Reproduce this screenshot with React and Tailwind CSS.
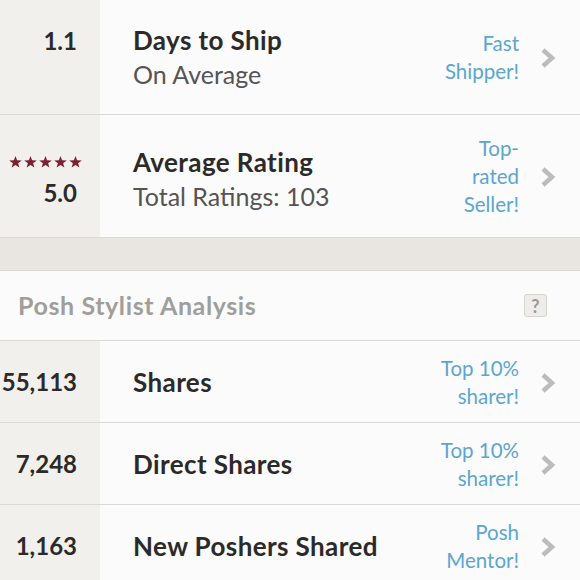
import React from "react";

const font = { fontFamily: "Lato, 'Open Sans', sans-serif" };

function Chevron() {
  return (
    <svg width="16" height="20" viewBox="0 0 16 20" className="shrink-0">
      <path d="M3 2 L12 10 L3 18" fill="none" stroke="#bdbcbb" strokeWidth="4.5" strokeLinecap="butt" strokeLinejoin="miter" />
    </svg>
  );
}

function Stars() {
  const star = "M6.5 0 L8.1 4.3 L12.8 4.4 L9.1 7.2 L10.4 11.6 L6.5 9 L2.6 11.6 L3.9 7.2 L0.2 4.4 L4.9 4.3 Z";
  return (
    <div className="flex gap-[2px]">
      {[0, 1, 2, 3, 4].map((i) => (
        <svg key={i} width="13" height="12" viewBox="0 0 13 12">
          <path d={star} fill="#7a2133" />
        </svg>
      ))}
    </div>
  );
}

function Notch() {
  return (
    <div className="w-0 h-0 border-y-[7px] border-y-transparent border-l-[7px] border-l-[#f2f0ed]" />
  );
}

function Row({ height, left, notchTop, title, sub, blue, border = true, midPad = "" }) {
  return (
    <div className={`flex ${height} ${border ? "border-b border-[#dcdad8]" : ""}`}>
      <div className="w-[100px] shrink-0 bg-[#f2f0ed] flex flex-col items-end justify-center pr-[23px]">
        {left}
      </div>
      <div className="flex flex-col justify-center w-0">
        <div className={notchTop}>
          <Notch />
        </div>
      </div>
      <div className="flex-1 flex items-center bg-[#fcfbfb] pl-[33px]">
        <div className={`flex-1 flex flex-col ${midPad}`}>
          <div className="text-[26px] leading-[34px] font-bold tracking-[0.4px] text-[#2b2a29]">{title}</div>
          {sub && <div className="text-[25px] leading-[34px] text-[#555453]">{sub}</div>}
        </div>
        <div className="text-[20.5px] leading-[28px] text-[#5aa6cf] text-right mr-[21px]">
          {blue.map((b, i) => (
            <div key={i}>{b}</div>
          ))}
        </div>
        <div className="mr-[24px] pt-[2px]">
          <Chevron />
        </div>
      </div>
    </div>
  );
}

const num = "text-[24px] font-bold text-[#2b2a29] leading-[34px]";

export default function App() {
  return (
    <div style={font} className="w-[580px] h-[580px] overflow-hidden bg-[#fcfbfb]">
      <Row
        height="h-[115px]"
        left={<div className={`${num} -mt-[33px]`}>1.1</div>}
        notchTop="-mt-[33px]"
        title="Days to Ship"
        sub="On Average"
        blue={["Fast", "Shipper!"]}
      />
      <Row
        height="h-[123px]"
        left={
          <div className="flex flex-col items-end pt-[14px]">
            <div className="mr-[-5px] mb-[10px]"><Stars /></div>
            <div className={`${num} -mt-[2px]`}>5.0</div>
          </div>
        }
        notchTop="-mt-[26px]"
        title="Average Rating"
        sub="Total Ratings: 103"
        blue={["Top-", "rated", "Seller!"]}
        midPad="pt-[6px]"
      />
      <div className="h-[33px] bg-[#e9e6e1] border-b border-[#d8d6d2]" />
      <div className="h-[70px] flex items-center border-b border-[#dcdad8] bg-[#fcfbfb] pl-[18px] pr-[33px]">
        <div className="flex-1 text-[25px] font-bold tracking-[0.6px] text-[#a09e9b]">Posh Stylist Analysis</div>
        <div className="w-[23px] h-[23px] rounded-[3px] bg-[#efedea] border border-[#d6d4d1] flex items-center justify-center">
          <span className="text-[18px] font-bold text-[#9b9996] leading-none">?</span>
        </div>
      </div>
      <Row
        height="h-[82px]"
        left={<div className={num}>55,113</div>}
        notchTop=""
        title="Shares"
        blue={["Top 10%", "sharer!"]}
      />
      <Row
        height="h-[82px]"
        left={<div className={num}>7,248</div>}
        notchTop=""
        title="Direct Shares"
        blue={["Top 10%", "sharer!"]}
      />
      <Row
        height="h-[82px]"
        left={<div className={num}>1,163</div>}
        notchTop=""
        title="New Poshers Shared"
        blue={["Posh", "Mentor!"]}
        border={false}
      />
    </div>
  );
}
